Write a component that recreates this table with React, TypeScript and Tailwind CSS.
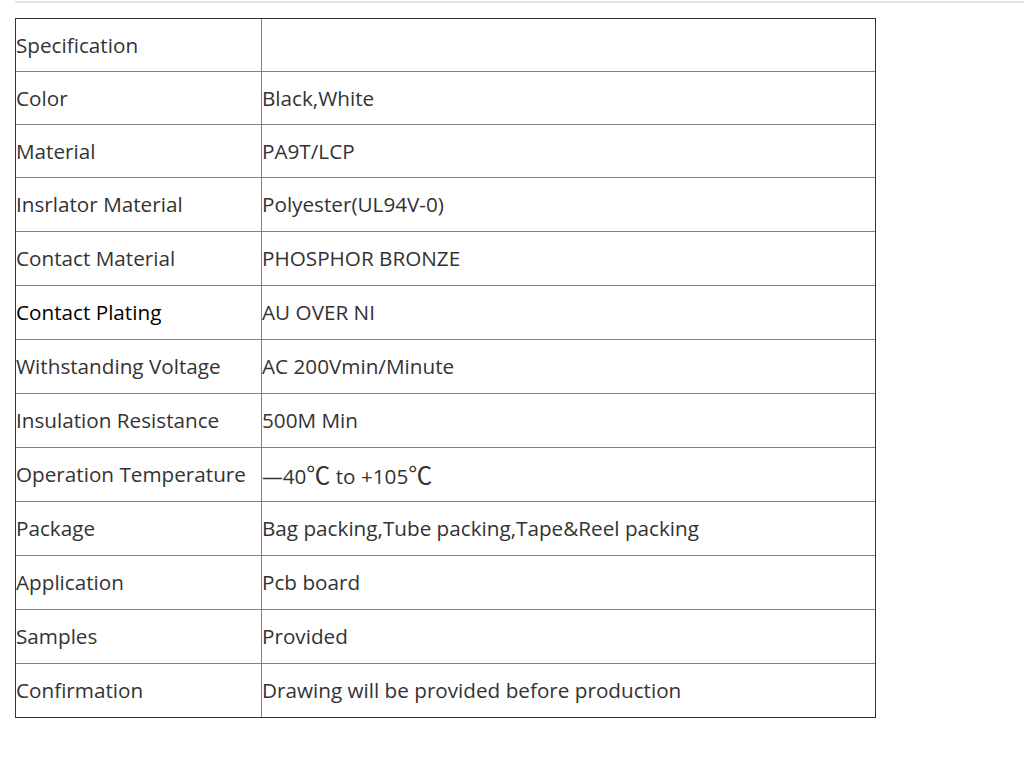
import React from "react";

const Deg = () => (
  <span className="text-[24px]" style={{ fontFamily: '"Noto Sans CJK SC", sans-serif' }}>
    ℃
  </span>
);

const rows: [string, React.ReactNode, boolean?][] = [
  ["Specification", ""],
  ["Color", "Black,White"],
  ["Material", "PA9T/LCP"],
  ["Insrlator Material", "Polyester(UL94V-0)"],
  ["Contact Material", "PHOSPHOR BRONZE"],
  ["Contact Plating", "AU OVER NI", true],
  ["Withstanding Voltage", "AC 200Vmin/Minute"],
  ["Insulation Resistance", "500M Min"],
  [
    "Operation Temperature",
    <>
      —40
      <Deg /> to +105
      <Deg />
    </>,
  ],
  ["Package", "Bag packing,Tube packing,Tape&Reel packing"],
  ["Application", "Pcb board"],
  ["Samples", "Provided"],
  ["Confirmation", "Drawing will be provided before production"],
];

export default function App() {
  return (
    <div className="w-[1024px] h-[765px] bg-white" style={{ fontFamily: '"Open Sans", sans-serif' }}>
      <div className="pt-px pl-[15px]">
        <div className="h-[2px] bg-[#e3e3e3]" />
      </div>
      <div className="ml-[15px] mt-[15px] w-[861px] border border-[#333]">
        {rows.map(([k, v, black], i) => (
          <div
            key={k}
            className={
              i === 0
                ? "flex h-[52px]"
                : i < 3
                ? "flex h-[53px] border-t border-[#808080]"
                : "flex h-[54px] border-t border-[#808080]"
            }
          >
            <div className={`w-[245px] flex items-center text-[20.7px] leading-none ${black ? "text-black" : "text-[#333]"}`}>
              {k}
            </div>
            <div className="flex-1 flex items-center border-l border-[#808080] text-[20.7px] leading-none text-[#333] whitespace-pre">
              <span>{v}</span>
            </div>
          </div>
        ))}
      </div>
    </div>
  );
}
